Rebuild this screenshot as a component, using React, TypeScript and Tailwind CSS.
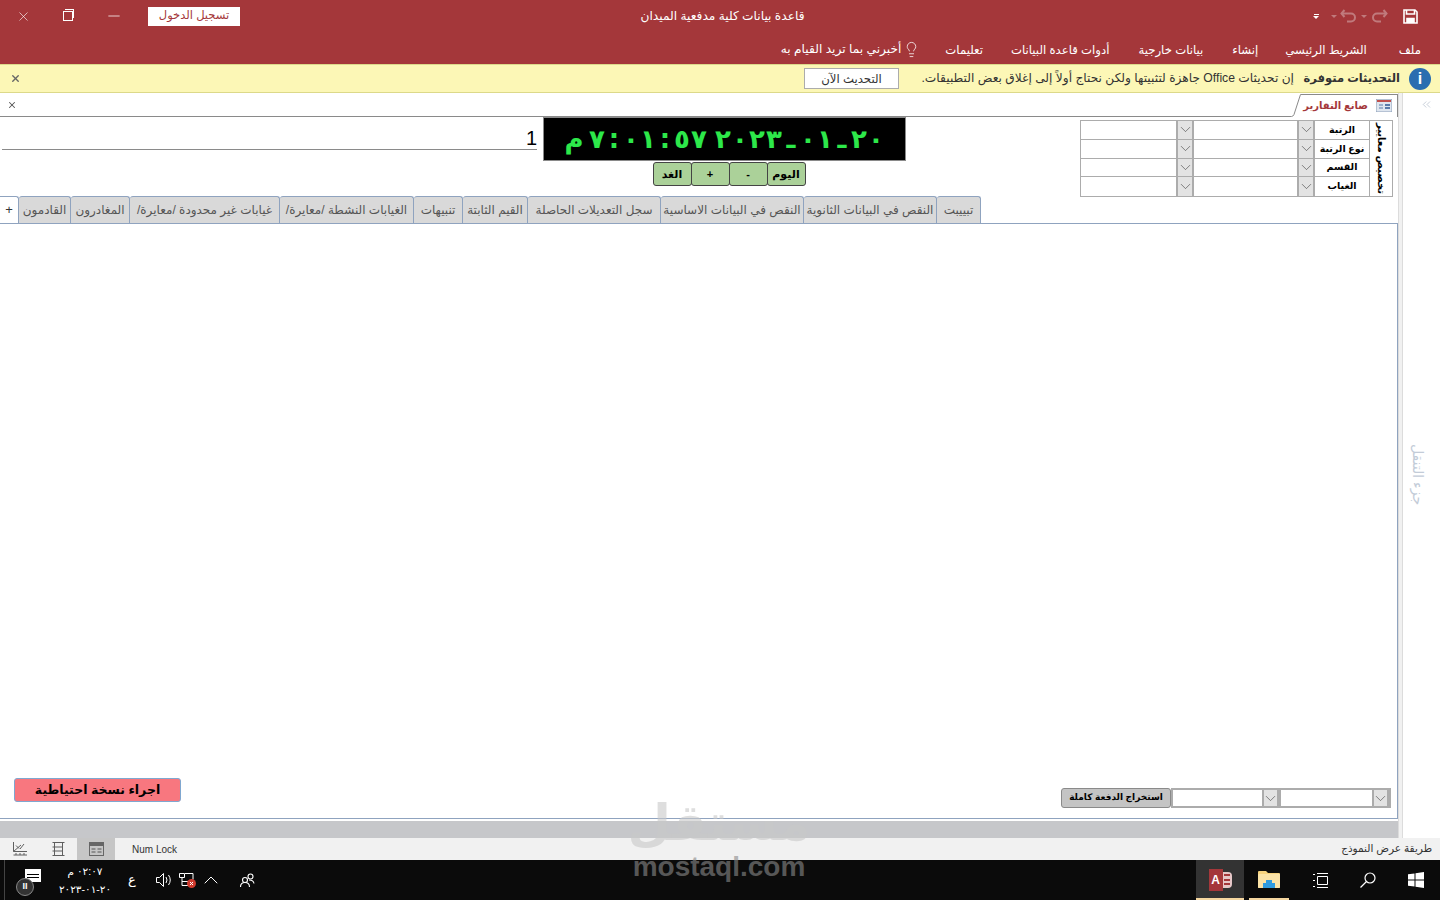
import React from "react";
import { Lightbulb, ChevronDown, ChevronUp, ChevronsLeft, X, Minus } from "lucide-react";

const font = "font-['Liberation_Sans','DejaVu_Sans',sans-serif]";

function Combo({ w, h = "h-[19px]", btn = "w-[18px]" }: { w: string; h?: string; btn?: string }) {
  return (
    <div className={`flex ${w} ${h} bg-white shrink-0`}>
      <div className="flex-1" />
      <div className={`${btn} shrink-0 h-full bg-[#e3e3e3] border-x-2 border-[#acacac] flex items-center justify-center overflow-hidden`}>
        <ChevronDown size={17} strokeWidth={0.8} className="text-[#333] shrink-0" />
      </div>
    </div>
  );
}

function FilterRow({ label, last }: { label: string; last?: boolean }) {
  return (
    <div className={`flex h-[19px] ${last ? "" : "border-b border-[#acacac]"}`}>
      <Combo w="w-[113px]" h="h-full" />
      <Combo w="w-[121px]" h="h-full" />
      <div className="w-[54px] flex items-center justify-center text-[9.5px] font-bold text-black whitespace-nowrap" dir="rtl">{label}</div>
    </div>
  );
}

const tabs: [string, string][] = [
  ["القادمون", "w-[52px]"],
  ["المغادرون", "w-[59px]"],
  ["غيابات غير محدودة /معايرة/", "w-[150px]"],
  ["الغيابات النشطة /معايرة/", "w-[134px]"],
  ["تنبيهات", "w-[49px]"],
  ["القيم الثابتة", "w-[65px]"],
  ["سجل التعديلات الحاصلة", "w-[133px]"],
  ["النقص في البيانات الاساسية", "w-[143px]"],
  ["النقص في البيانات الثانوية", "w-[133px]"],
  ["تبييبت", "w-[44px]"],
];

const clockChars = ["م", " ", "٧", ":", "٠", "١", ":", "٥", "٧", " ", "٢", "٠", "٢", "٣", "ـ", "٠", "١", "ـ", "٢", "٠"];

function Save() {
  return (
    <svg width="15" height="15" viewBox="0 0 15 15" fill="none" stroke="#fff" strokeWidth="1.6">
      <path d="M1 1h11l2 2v11H1z" />
      <path d="M3.5 1v4h8V1" />
      <path d="M4 14v-4.5h7V14" fill="#fff" />
    </svg>
  );
}

function Curve({ flip }: { flip?: boolean }) {
  return (
    <svg width="18" height="14" viewBox="0 0 18 14" fill="none" stroke="#c07a7c" strokeWidth="2" className={flip ? "-scale-x-100" : ""}>
      <path d="M4.500 1 L1.500 4.500 L4.500 8" />
      <path d="M1.500 4.500 H11 a4 4 0 0 1 0 8 H7" />
    </svg>
  );
}

function ViewIcon({ kind }: { kind: number }) {
  if (kind === 0)
    return (
      <svg width="16" height="14" viewBox="0 0 16 14" fill="none" stroke="#5f5f5f">
        <path d="M1.500 0v9.500H15M1.500 9.500L9 3M4 3.500l3 3M12 2l-4 5M1.500 13H15M4 11v2M8 11v2M12 11v2" />
      </svg>
    );
  if (kind === 1)
    return (
      <svg width="13" height="14" viewBox="0 0 13 14" fill="none" stroke="#5f5f5f">
        <path d="M.5.5h12M.5 13.500h12M2.500.5v13M10.500.5v13M2.500 5h8M2.500 9h8M.5 5h2M.5 9h2" />
      </svg>
    );
  return (
    <svg width="15" height="14" viewBox="0 0 15 14">
      <rect width="15" height="14" fill="#666" />
      <rect x="1" y="4" width="13" height="9" fill="#c6c6c6" />
      <path d="M2.500 7h4M8.500 7h4M2.500 10h4M8.500 10h4" stroke="#555" />
    </svg>
  );
}

function AccessLogo() {
  return (
    <div className="relative w-[23px] h-[22px]">
      <div className="absolute left-[9px] top-[3px] w-[14px] h-[16px] rounded-[4px] bg-[#e6c7c8] flex flex-col justify-evenly px-[2px] pl-[6px]">
        <div className="h-[2px] bg-[#a4373a]" />
        <div className="h-[2px] bg-[#a4373a]" />
        <div className="h-[2px] bg-[#a4373a]" />
      </div>
      <div className="absolute left-0 top-0 w-[14px] h-[22px] bg-[#a4373a] flex items-center justify-center text-white text-[12px] font-bold">A</div>
    </div>
  );
}

function Folder() {
  return (
    <svg width="22" height="18" viewBox="0 0 22 18">
      <path d="M0 2a1 1 0 0 1 1-1h7l2 2h11a1 1 0 0 1 1 1v13a1 1 0 0 1-1 1H1a1 1 0 0 1-1-1z" fill="#f7d37e" />
      <rect y="4" width="22" height="14" rx="1" fill="#fbe3a7" />
      <path d="M5 18v-5h3v-3h6v3h3v5z" fill="#2f9be0" />
    </svg>
  );
}

export default function App() {
  return (
    <div className={`relative w-[1440px] h-[900px] overflow-hidden bg-white flex flex-col ${font}`}>
      {/* title bar */}
      <div className="h-[32px] shrink-0 bg-[#a4373a] flex items-center text-white">
        <div className="flex items-center w-[240px] pl-[16px] shrink-0">
          <X size={15} strokeWidth={1} className="shrink-0" />
          <div className="ml-[32px] w-[10px] h-[10px] border border-white relative shrink-0">
            <div className="absolute -top-[3px] left-[1px] w-[9px] h-[9px] border-t border-r border-white" />
          </div>
          <Minus size={18} strokeWidth={1} className="ml-[32px] shrink-0" />
          <div className="ml-[25px] w-[92px] shrink-0 h-[19px] bg-white text-[#a4373a] text-[11.5px] flex items-center justify-center" dir="rtl">تسجيل الدخول</div>
        </div>
        <div className="ml-[400px] w-[165px] shrink-0 text-center whitespace-nowrap text-[12.2px]" dir="rtl">قاعدة بيانات كلية مدفعية الميدان</div>
        <div className="ml-auto flex items-center pr-[22px]">
          <div className="flex flex-col items-center gap-[1px]">
            <div className="w-[5px] h-[1px] bg-white" />
            <div className="w-0 h-0 border-x-[3px] border-t-[3px] border-x-transparent border-t-white" />
          </div>
          <div className="ml-[12px] w-0 h-0 border-x-[3px] border-t-[3px] border-x-transparent border-t-[#c07a7c]" />
          <div className="ml-[3px]"><Curve /></div>
          <div className="ml-[3px] w-0 h-0 border-x-[3px] border-t-[3px] border-x-transparent border-t-[#c07a7c]" />
          <div className="ml-[3px]"><Curve flip /></div>
          <div className="ml-[15px]"><Save /></div>
        </div>
      </div>

      {/* ribbon tabs */}
      <div className="h-[32px] shrink-0 bg-[#a4373a] flex items-center justify-end text-white text-[11.7px] whitespace-nowrap pt-[3px] pr-[19px]" dir="ltr">
        <span dir="rtl" className="mr-[2px] text-[12.2px]">أخبرني بما تريد القيام به</span>
        <Lightbulb size={17} strokeWidth={1.1} className="mr-[25px] shrink-0" />
        <span dir="rtl" className="mr-[28px]">تعليمات</span>
        <span dir="rtl" className="mr-[29px]">أدوات قاعدة البيانات</span>
        <span dir="rtl" className="mr-[29px]">بيانات خارجية</span>
        <span dir="rtl" className="mr-[27px]">إنشاء</span>
        <span dir="rtl" className="mr-[32px]">الشريط الرئيسي</span>
        <span dir="rtl">ملف</span>
      </div>

      {/* message bar */}
      <div className="h-[29px] shrink-0 bg-[#fcf7b6] border-y border-[#dcd98a] flex items-center text-[#333] whitespace-nowrap">
        <X size={11} strokeWidth={3} className="ml-[10px] text-[#666] shrink-0" />
        <div className="ml-[783px] w-[95px] shrink-0 h-[21px] bg-white border border-[#acacac] text-[11.7px] flex items-center justify-center" dir="rtl">التحديث الآن</div>
        <div className="ml-[21px] w-[374px] shrink-0 text-[12.2px] text-right" dir="rtl">إن تحديثات Office جاهزة لتثبيتها ولكن نحتاج أولاً إلى إغلاق بعض التطبيقات.</div>
        <div className="ml-[10px] w-[96px] shrink-0 text-[11.5px] font-bold text-right" dir="rtl">التحديثات متوفرة</div>
        <div className="ml-[9px] w-[22px] h-[22px] shrink-0 rounded-full bg-[#2a6eb0] text-white flex items-center justify-center text-[16px] font-bold">i</div>
      </div>

      {/* workspace */}
      <div className="flex h-[745px] shrink-0">
        <div className="w-[1398px] shrink-0 flex flex-col">
          {/* document tab strip */}
          <div className="h-[24px] flex items-end">
            <div className="flex-1 h-full border-b border-[#8a8a8a] flex items-center pl-[7px]">
              <X size={10} strokeWidth={2.5} className="text-[#555]" />
            </div>
            <svg width="10" height="24" viewBox="0 0 10 24" fill="none" stroke="#8a8a8a" className="shrink-0">
              <path d="M0 23.500h.5q1.500 0 2.500-2L9 3Q9.500 1 10 1" />
            </svg>
            <div className="w-[97px] shrink-0 h-[23px] border-t border-r border-[#8a8a8a] flex items-center justify-end gap-[8px] pr-[5px] pb-[2px]">
              <span className="text-[10px] font-bold text-[#a4373a] whitespace-nowrap" dir="rtl">صانع التقارير</span>
              <svg width="16" height="13" viewBox="0 0 16 13">
                <rect width="16" height="13" fill="#dfe6ef" stroke="#8c9fb8" />
                <rect x="1" y="1" width="14" height="2" fill="#c0504d" />
                <path d="M3 6h4M3 9h4" stroke="#5a7aa8" />
                <rect x="9" y="5" width="5" height="2" fill="#5a7aa8" />
                <rect x="9" y="8" width="5" height="2" fill="#5a7aa8" />
              </svg>
            </div>
          </div>

          {/* form header */}
          <div className="h-[79px] flex">
            <div className="w-[537px] shrink-0 pl-[2px] pt-[9px]">
              <div className="h-[24px] border-b border-[#8a8a8a] flex justify-end items-center">
                <span className="text-black text-[20px] leading-[20px]">1</span>
              </div>
            </div>
            <div className="ml-[6px] w-[363px] shrink-0 flex flex-col items-center">
              <div className="w-full h-[44px] bg-black border border-[#8a8a8a] flex items-center justify-center font-['DejaVu_Sans',sans-serif] font-bold text-[26px] leading-none text-[#2de84a]" dir="ltr">
                {clockChars.map((c, i) =>
                  c === " " ? (
                    <span key={i} className="w-[7px] shrink-0" />
                  ) : (
                    <span key={i} className="w-[17px] shrink-0 text-center">{c}</span>
                  )
                )}
              </div>
              <div className="flex mt-[1px] ml-[8px]">
                {["الغد", "+", "-", "اليوم"].map((t) => (
                  <div key={t} className="w-[39px] h-[24px] -mr-px bg-[#abd199] border border-[#444] rounded-[3px] flex items-center justify-center text-[11px] font-bold text-black">
                    {t}
                  </div>
                ))}
              </div>
            </div>
            <div className="ml-[174px] mt-[3px] w-[313px] shrink-0 h-[77px] border border-[#acacac] flex">
              <div className="flex-1 flex flex-col">
                <FilterRow label="الرتبة" />
                <FilterRow label="نوع الرتبة" />
                <FilterRow label="القسم" />
                <FilterRow label="الغياب" last />
              </div>
              <div className="w-[24px] shrink-0 border-l border-[#acacac] flex items-center justify-center overflow-hidden">
                <span className="rotate-90 whitespace-nowrap text-[10px] font-bold text-black" dir="rtl">تخصيص معايير</span>
              </div>
            </div>
          </div>

          {/* tab control */}
          <div className="h-[27px] flex">
            <div className="w-[19px] shrink-0 h-full bg-white border-r border-t border-[#8fa3bf] rounded-tr-[3px] text-[13px] text-[#333] flex items-center justify-center">+</div>
            {tabs.map(([t, w]) => (
              <div key={t} className={`${w} shrink-0 h-full bg-[#d9d9d9] border-r border-t border-[#8fa3bf] rounded-t-[3px] text-[12px] text-[#555] flex items-center justify-center whitespace-nowrap overflow-hidden`} dir="rtl">
                {t}
              </div>
            ))}
          </div>

          {/* tab body */}
          <div className="h-[596px] shrink-0 border-y border-r border-[#8fa3bf] flex flex-col justify-end pb-[10px]">
            <div className="flex items-start pl-[14px] pr-[6px]">
              <div className="w-[167px] h-[24px] bg-[#f8777f] border border-[#7fa7d0] rounded-[3px] text-[12.500px] font-bold text-black flex items-center justify-center whitespace-nowrap" dir="rtl">اجراء نسخة احتياطية</div>
              <div className="ml-auto mt-[10px] flex">
                <div className="w-[110px] h-[20px] bg-[#c4c4c4] border border-[#8a8a8a] rounded-[3px] text-[9px] font-bold text-black flex items-center justify-center whitespace-nowrap" dir="rtl">استخراج الدفعة كاملة</div>
                <div className="border-2 border-[#acacac]"><Combo w="w-[106px]" h="h-[16px]" btn="w-[17px]" /></div>
                <div className="border-2 border-l-0 border-[#acacac]"><Combo w="w-[108px]" h="h-[16px]" btn="w-[17px]" /></div>
              </div>
            </div>
          </div>
          <div className="flex-1 mt-[2px] bg-[#c6c7ca]" />
        </div>

        {/* collapsed navigation pane */}
        <div className="w-[5px] shrink-0 bg-[#f1f1f1] border-x border-[#dcdcdc]" />
        <div className="flex-1 min-w-0 flex flex-col items-center overflow-hidden">
          <ChevronsLeft size={13} strokeWidth={1} className="mt-[5px] ml-[9px] text-[#9aa7bb] shrink-0" />
          <div className="mt-[332px] mr-[8px] h-[62px] w-[20px] flex items-center justify-center">
            <span className="rotate-90 whitespace-nowrap text-[14px] text-[#c3ccd8]" dir="rtl">جزء التنقل</span>
          </div>
        </div>
      </div>

      {/* status bar */}
      <div className="h-[22px] shrink-0 bg-[#f1f1f1] flex items-center text-[10.500px] text-[#333]">
        <div className="w-[39px] flex justify-center pl-[1px]"><ViewIcon kind={0} /></div>
        <div className="w-[38px] flex justify-center"><ViewIcon kind={1} /></div>
        <div className="w-[38px] h-full bg-[#c6c6c6] flex items-center justify-center"><ViewIcon kind={2} /></div>
        <span className="ml-[17px] text-[10px]">Num Lock</span>
        <span className="ml-auto mr-[8px]" dir="rtl">طريقة عرض النموذج</span>
      </div>

      {/* taskbar */}
      <div className="h-[40px] shrink-0 bg-[#0b0b0b] flex items-center text-white">
        <div className="ml-[4px] w-px h-full bg-[#444]" />
        <div className="relative ml-[20px] w-[16px] h-[22px] -mt-[2px]">
          <div className="absolute right-0 top-[1px] w-[16px] h-[13px] bg-white flex flex-col justify-center gap-[2px] px-[2px]">
            <div className="h-px bg-black" /><div className="h-px bg-black" />
          </div>
          <div className="absolute -left-[9px] top-[10px] w-[18px] h-[18px] rounded-full bg-[#333] border border-[#888] text-[9px] flex items-center justify-center font-bold">II</div>
        </div>
        <div className="ml-[9px] w-[70px] flex flex-col items-center text-[10.500px] leading-[18px] -mt-[1px]" dir="rtl">
          <span>٠٢:٠٧ م</span>
          <span>٢٠-٠١-٢٠٢٣</span>
        </div>
        <span className="ml-[8px] text-[13px]">ع</span>
        <svg className="ml-[20px] shrink-0" width="16" height="14" viewBox="0 0 16 14" fill="none" stroke="#fff">
          <path d="M.5 4.500h3l4-4v13l-4-4h-3zM10 4q2 3 0 6M12.500 2q3.500 5 0 10" />
        </svg>
        <svg className="ml-[7px] shrink-0" width="17" height="16" viewBox="0 0 17 16" fill="none">
          <path d="M.5 1.500h5v4h-5zM3 5.500v8h8M3 9.500h7M6 1.500h8v6" stroke="#fff" />
          <circle cx="12.500" cy="11.500" r="4.500" fill="#d13b2e" />
          <path d="M11 10l3 3M14 10l-3 3" stroke="#fff" />
        </svg>
        <ChevronUp size={24} strokeWidth={1} className="ml-[3px] shrink-0" />
        <svg className="ml-[17px] shrink-0" width="15" height="15" viewBox="0 0 15 15" fill="none" stroke="#fff" strokeWidth="1.100">
          <circle cx="10.500" cy="3.500" r="2.500" />
          <circle cx="5" cy="7" r="2.500" />
          <path d="M.5 14q0-4.500 4.500-4.500T9.500 14M9 7q4.500 0 5 3.500" />
        </svg>
        <div className="ml-auto flex items-center h-full">
          <div className="w-[48px] h-full bg-[#333] border-b-2 border-[#f5d7a0] flex items-center justify-center pt-[1px]"><AccessLogo /></div>
          <div className="ml-[5px] w-[40px] h-full border-b-2 border-[#f5d7a0] flex items-center justify-center"><Folder /></div>
          <svg className="ml-[24px] shrink-0" width="15" height="15" viewBox="0 0 15 15" fill="none" stroke="#fff">
            <path d="M4.500 3.500h10v8h-10zM4 .5h11M4 14.500h11M0 1.500h2M0 7.500h2M0 13.500h2" />
          </svg>
          <svg className="ml-[32px] shrink-0" width="16" height="16" viewBox="0 0 16 16" fill="none" stroke="#fff" strokeWidth="1.200">
            <circle cx="10" cy="6" r="5" />
            <path d="M6.500 9.500L.5 15.500" />
          </svg>
          <svg className="ml-[32px] mr-[16px] shrink-0" width="16" height="16" viewBox="0 0 16 16" fill="#fff">
            <path d="M0 2.300L6.500 1.400V7.500H0zM7.500 1.300L16 0V7.500H7.500zM0 8.500H6.500V14.600L0 13.700zM7.500 8.500H16V16L7.500 14.700z" />
          </svg>
        </div>
      </div>

      {/* watermark */}
      <div className="absolute left-[632px] top-[795px] w-[174px] flex flex-col items-center pointer-events-none opacity-60">
        <span className="text-[50px] leading-[56px] font-bold text-[#c9c9c9]" dir="rtl">مستقل</span>
        <span className="text-[28px] leading-[26px] font-bold text-[#8a8a8a] mt-[3px]">mostaql.com</span>
      </div>
    </div>
  );
}
